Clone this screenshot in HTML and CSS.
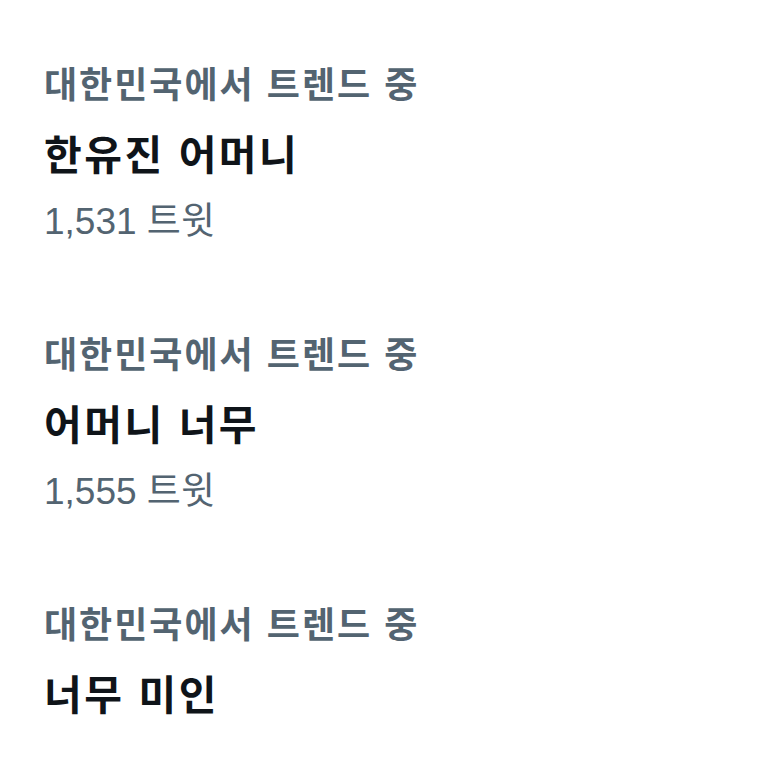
FILE: index.html
```html
<!DOCTYPE html>
<html lang="ko">
<head>
    <meta charset="UTF-8">
    <meta name="viewport" content="width=device-width, initial-scale=1.0">
    <title>트렌드</title>
    <link rel="stylesheet" href="styles.css">
</head>
<body>
    <div class="trends">
        <div class="trend">
            <div class="trend-label">대한민국에서 트렌드 중</div>
            <div class="trend-title">한유진 어머니</div>
            <div class="trend-count">1,531 트윗</div>
        </div>
        <div class="trend">
            <div class="trend-label">대한민국에서 트렌드 중</div>
            <div class="trend-title">어머니 너무</div>
            <div class="trend-count">1,555 트윗</div>
        </div>
        <div class="trend">
            <div class="trend-label">대한민국에서 트렌드 중</div>
            <div class="trend-title">너무 미인</div>
        </div>
    </div>
</body>
</html>
```

FILE: styles.css
```css
body { margin: 0; background: #fff; font-family: "Noto Sans CJK KR", "Noto Sans", sans-serif; }
.trends { padding: 60px 0 0 44px; }
.trend { padding-bottom: 86px; }

/* 트렌드 항목 */
.trend-label { color: #536471; font-size: 36px; font-weight: bold; line-height: 44px; letter-spacing: 2px; }
.trend-title { color: #0f1419; font-size: 41px; font-weight: bold; line-height: 58px; margin-top: 19px; letter-spacing: 2.5px; }
.trend-count { color: #536471; font-size: 37px; line-height: 44px; margin-top: 19px; font-family: "Liberation Sans", "Noto Sans CJK KR", sans-serif; }
```
